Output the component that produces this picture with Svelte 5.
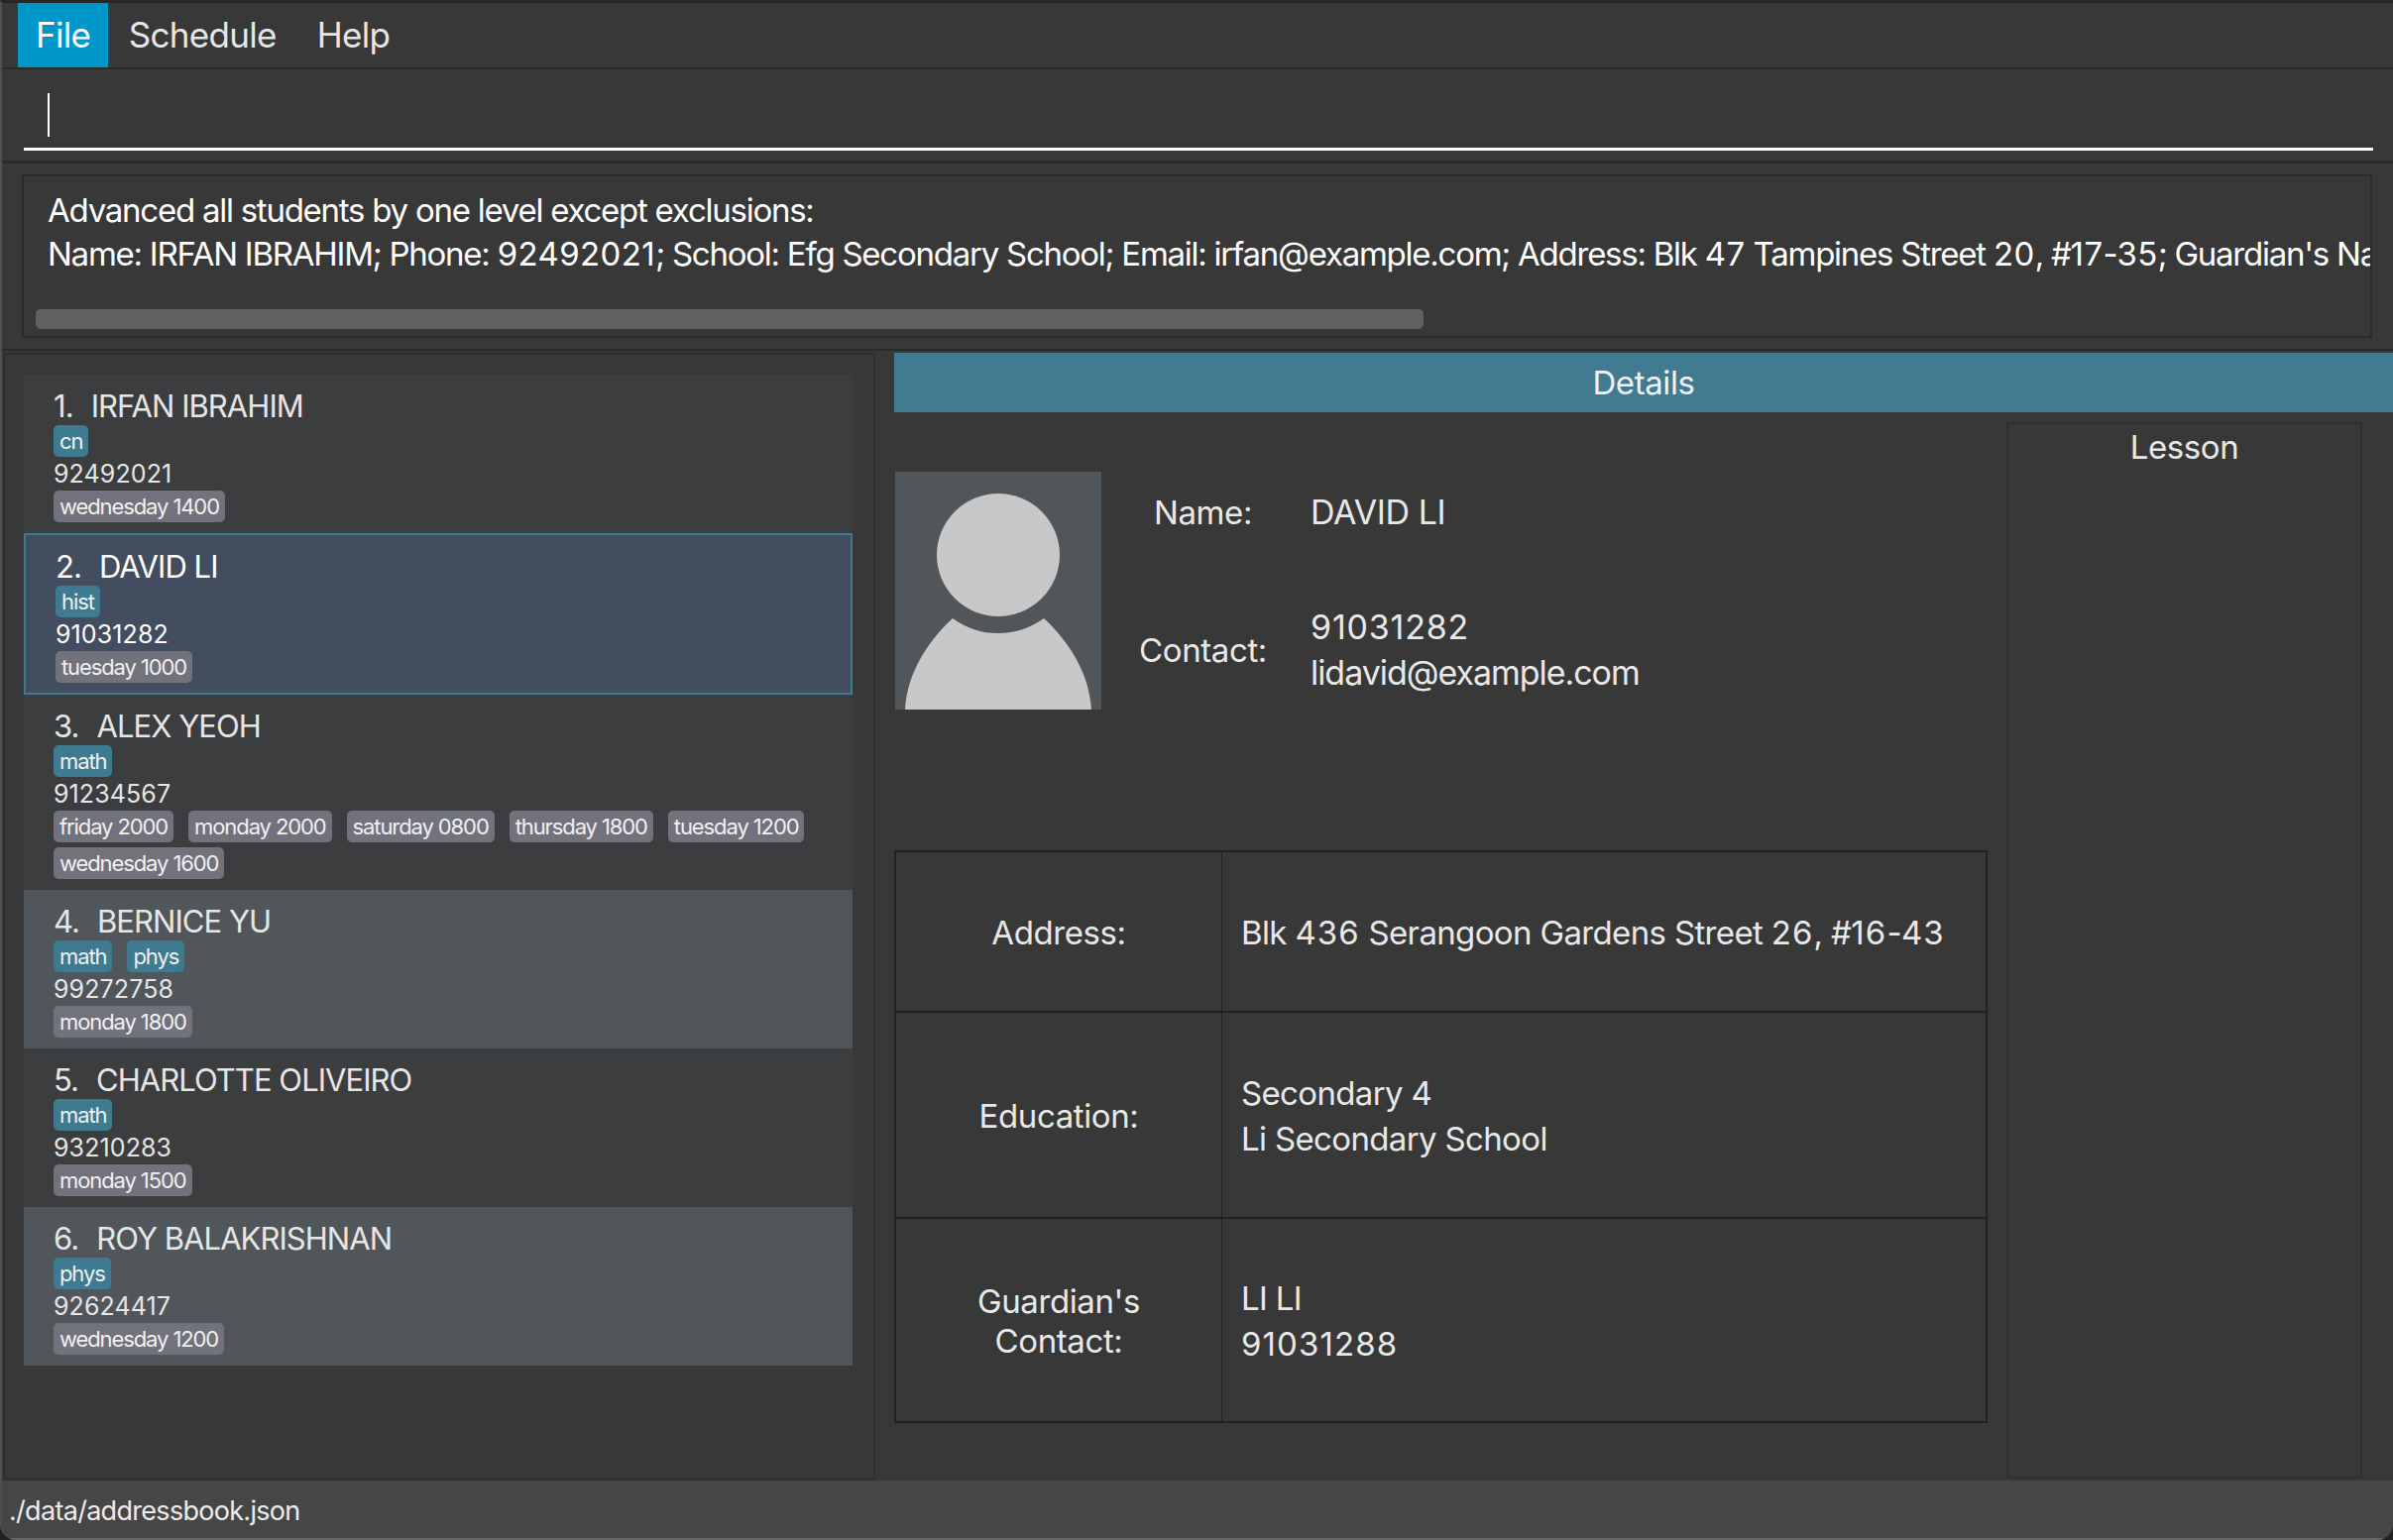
<script>
  const students = [
    { name: 'IRFAN IBRAHIM', tags: ['cn'], phone: '92492021', lessons: ['wednesday 1400'] },
    { name: 'DAVID LI', tags: ['hist'], phone: '91031282', lessons: ['tuesday 1000'], selected: true },
    { name: 'ALEX YEOH', tags: ['math'], phone: '91234567', lessons: ['friday 2000', 'monday 2000', 'saturday 0800', 'thursday 1800', 'tuesday 1200', 'wednesday 1600'] },
    { name: 'BERNICE YU', tags: ['math', 'phys'], phone: '99272758', lessons: ['monday 1800'] },
    { name: 'CHARLOTTE OLIVEIRO', tags: ['math'], phone: '93210283', lessons: ['monday 1500'] },
    { name: 'ROY BALAKRISHNAN', tags: ['phys'], phone: '92624417', lessons: ['wednesday 1200'] }
  ];

  const resultLine = "Name: IRFAN IBRAHIM; Phone: 92492021; School: Efg Secondary School; Email: irfan@example.com; Address: Blk 47 Tampines Street 20, #17-35; Guardian's Name: IBRAHIM; Guardian's Phone: 92492022";
</script>

{#snippet txt(t)}{#each t.split(/(\d+)/) as p, i}{#if i % 2}<span class="d">{p}</span>{:else}{p}{/if}{/each}{/snippet}

<div class="window">
  <nav class="menu">
    <span class="menu-item active">File</span>
    <span class="menu-item">Schedule</span>
    <span class="menu-item">Help</span>
  </nav>

  <div class="command">
    <div class="command-field"><span class="caret"></span></div>
  </div>

  <div class="result-wrap">
    <div class="result">
      <div class="result-text">
        <div>Advanced all students by one level except exclusions:</div>
        <div>{@render txt(resultLine)}</div>
      </div>
      <div class="scrollbar"><div class="thumb"></div></div>
    </div>
  </div>

  <div class="main">
    <aside class="list">
      {#each students as s, i}
        <div class="card" class:even={i % 2 === 1} class:selected={s.selected}>
          <div class="card-name"><span class="num">{i + 1}.</span>{s.name}</div>
          <div class="chips">
            {#each s.tags as t}<span class="chip tag">{t}</span>{/each}
          </div>
          <div class="phone">{s.phone}</div>
          <div class="chips">
            {#each s.lessons as l}<span class="chip lesson">{l}</span>{/each}
          </div>
        </div>
      {/each}
    </aside>

    <section class="details">
      <div class="details-head">Details</div>
      <div class="details-body">
        <div class="info">
          <div class="profile">
            <svg class="photo" viewBox="0 0 208 240" aria-hidden="true">
              <rect width="208" height="240" fill="#50565a" />
              <circle cx="104" cy="84" r="62" fill="#c8c8c8" />
              <path d="M58 148 A78 78 0 0 0 150 148 C176 172 196 204 198 240 L10 240 C12 204 32 172 58 148 Z" fill="#c8c8c8" />
            </svg>
            <div class="fields">
              <div class="field-row name-row">
                <div class="field-label">Name:</div>
                <div class="field-value caps">DAVID LI</div>
              </div>
              <div class="field-row">
                <div class="field-label">Contact:</div>
                <div class="field-value">{@render txt('91031282')}<br />lidavid@example.com</div>
              </div>
            </div>
          </div>

          <div class="table">
            <div class="cell label">Address:</div>
            <div class="cell value">{@render txt('Blk 436 Serangoon Gardens Street 26, #16-43')}</div>
            <div class="cell label">Education:</div>
            <div class="cell value">{@render txt('Secondary 4')}<br />Li Secondary School</div>
            <div class="cell label guardian">Guardian's<br />Contact:</div>
            <div class="cell value">LI LI<br />{@render txt('91031288')}</div>
          </div>
        </div>

        <div class="lesson-panel">Lesson</div>
      </div>
    </section>
  </div>

  <footer class="status">./data/addressbook.json</footer>
</div>

<style>
  :global(body) {
    margin: 0;
    background: #222;
  }

  .window {
    box-sizing: border-box;
    width: 2414px;
    height: 1554px;
    display: flex;
    flex-direction: column;
    background: #383838;
    border-top: 3px solid #262626;
    border-left: 2px solid #4f4f4f;
    border-radius: 0 0 16px 16px;
    overflow: hidden;
    font-family: Inter, "Liberation Sans", sans-serif;
    color: #fff;
  }

  .d {
    letter-spacing: 0.4px;
  }

  .menu {
    height: 65px;
    display: flex;
    padding-left: 16px;
    flex-shrink: 0;
  }

  .menu-item {
    display: flex;
    align-items: center;
    padding: 0 20.5px 2px;
    font-size: 35px;
    letter-spacing: -0.7px;
    color: #e6e6e6;
  }

  .menu-item.active {
    background: #0096c9;
    color: #fff;
    padding: 0 18px 2px;
  }

  .command {
    height: 97px;
    box-sizing: border-box;
    padding: 0 20px 0 22px;
    border-top: 2px solid #2b2b2b;
    border-bottom: 3px solid #2b2b2b;
    flex-shrink: 0;
  }

  .command-field {
    height: 82px;
    border-bottom: 3px solid #fff;
    box-sizing: border-box;
    padding: 24px 0 0 24px;
  }

  .caret {
    display: block;
    width: 2px;
    height: 44px;
    background: #fff;
  }

  .result-wrap {
    height: 189px;
    box-sizing: border-box;
    padding: 11px 21px 11px 20px;
    border-bottom: 2px solid #2b2b2b;
    flex-shrink: 0;
  }

  .result {
    height: 100%;
    box-sizing: border-box;
    border: 2px solid #2b2b2b;
    position: relative;
    overflow: hidden;
  }

  .result-text {
    padding: 12px 0 0 24px;
    font-size: 33px;
    line-height: 44px;
    letter-spacing: -1.25px;
    white-space: nowrap;
  }

  .scrollbar {
    position: absolute;
    left: 12px;
    right: 0;
    bottom: 7px;
  }

  .thumb {
    width: 1400px;
    height: 20px;
    background: #616161;
    border-radius: 5px;
  }

  .main {
    flex: 1;
    min-height: 0;
    display: flex;
    margin-top: 2px;
  }

  .list {
    box-sizing: border-box;
    width: 880px;
    margin-left: 1px;
    border: 2px solid #2f2f2f;
    border-bottom-width: 3px;
    padding: 20px 21px 0 19px;
    flex-shrink: 0;
  }

  .card {
    box-sizing: border-box;
    padding: 13px 30px 11px;
    background: #3c3d3f;
    color: #e6e6e6;
  }

  .card.even {
    background: #51565a;
  }

  .card.selected {
    background: #424d5f;
    border: 2px solid #3e7b91;
    padding-bottom: 10px;
    color: #fff;
  }

  .card-name {
    font-size: 31px;
    line-height: 38px;
    letter-spacing: -0.95px;
  }

  .num {
    margin-right: 18px;
  }

  .chips {
    display: flex;
    flex-wrap: wrap;
    gap: 5px 15px;
  }

  .chip {
    height: 32px;
    box-sizing: border-box;
    padding: 0 6px;
    border-radius: 5px;
    font-size: 22px;
    line-height: 32px;
    letter-spacing: -1.1px;
    color: #f0f0f0;
  }

  .tag {
    background: #3e7a90;
  }

  .lesson {
    background: #72727d;
  }

  .phone {
    font-size: 25px;
    line-height: 34px;
    letter-spacing: 0.1px;
  }

  .details {
    flex: 1;
    min-width: 0;
    padding-left: 19px;
    display: flex;
    flex-direction: column;
  }

  .details-head {
    height: 60px;
    flex-shrink: 0;
    background: #417a91;
    display: flex;
    align-items: center;
    justify-content: center;
    font-size: 33px;
    letter-spacing: -0.4px;
    color: #eef4f6;
  }

  .details-body {
    flex: 1;
    min-height: 0;
    display: flex;
    padding-top: 10px;
  }

  .info {
    width: 1103px;
    flex-shrink: 0;
    padding-top: 50px;
    box-sizing: border-box;
  }

  .profile {
    display: flex;
    height: 240px;
  }

  .photo {
    display: block;
    width: 208px;
    height: 240px;
    margin-left: 1px;
    flex-shrink: 0;
  }

  .fields {
    flex: 1;
    display: flex;
    flex-direction: column;
    padding-top: 5px;
  }

  .field-row {
    display: flex;
    align-items: center;
    height: 92px;
  }

  .name-row {
    height: 72px;
    margin-bottom: 57px;
  }

  .field-label {
    width: 205px;
    text-align: center;
    font-size: 33px;
    letter-spacing: -0.4px;
    color: #e8e8e8;
    margin-right: 6px;
  }

  .field-value {
    font-size: 34px;
    line-height: 46px;
    letter-spacing: -1.05px;
    color: #e8e8e8;
  }

  .field-value .d {
    letter-spacing: 0.8px;
  }

  .field-value.caps {
    letter-spacing: -0.4px;
  }

  .table {
    margin-top: 142px;
    display: grid;
    grid-template-columns: 329px 1fr;
    grid-template-rows: 160px 208px 206px;
    border: 2px solid #222;
    box-sizing: border-box;
    height: 578px;
  }

  .cell {
    font-size: 33px;
    letter-spacing: -0.65px;
    line-height: 46px;
    color: #e8e8e8;
    box-sizing: border-box;
    align-content: center;
    padding-top: 2px;
    border-top: 2px solid #222;
  }

  .cell:nth-child(-n+2) {
    border-top: 0;
  }

  .cell .d {
    letter-spacing: 1.1px;
  }

  .cell.value {
    padding-left: 19px;
  }

  .cell.label {
    text-align: center;
    border-right: 1px solid #222;
    letter-spacing: -0.4px;
  }

  .cell.guardian {
    line-height: 40px;
  }

  .lesson-panel {
    box-sizing: border-box;
    width: 359px;
    margin-left: 19px;
    margin-bottom: 2px;
    border: 2px solid #2f2f2f;
    text-align: center;
    font-size: 33px;
    letter-spacing: -0.4px;
    line-height: 46px;
    color: #e8e8e8;
  }

  .status {
    height: 60px;
    flex-shrink: 0;
    background: #464646;
    display: flex;
    align-items: center;
    padding: 2px 0 0 7px;
    font-size: 27px;
    letter-spacing: -0.7px;
    color: #ececec;
    border-bottom: 2px solid #666;
    box-sizing: border-box;
  }
</style>
